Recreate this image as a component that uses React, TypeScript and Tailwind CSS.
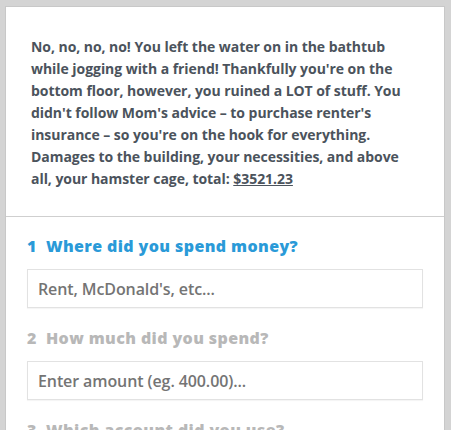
import React from "react";

const lines = [
  "No, no, no, no! You left the water on in the bathtub",
  "while jogging with a friend! Thankfully you're on the",
  "bottom floor, however, you ruined a LOT of stuff. You",
  "didn't follow Mom's advice \u2013 to purchase renter's",
  "insurance \u2013 so you're on the hook for everything.",
  "Damages to the building, your necessities, and above",
];

export default function App() {
  return (
    <div
      className="min-h-[430px] w-[451px] bg-[#d4d4d4] pt-[6px] pl-[5px] pr-[6px] overflow-hidden"
      style={{ fontFamily: '"Open Sans", "Liberation Sans", sans-serif' }}
    >
      <div className="bg-white border border-[#c8c8c8] h-[440px]">
        <div className="pt-[29px] pb-[26px] pl-[25px] pr-[10px] border-b border-[#cfcfcf]">
          <p className="text-[14px] leading-[22px] font-bold text-[#4b535c] tracking-[-0.05px] whitespace-nowrap">
            {lines.map((l, i) => (
              <React.Fragment key={i}>
                {l}
                <br />
              </React.Fragment>
            ))}
            all, your hamster cage, total: <span className="underline">$3521.23</span>
          </p>
        </div>
        <div className="pt-[17px] px-[21px]">
          <h2 className="text-[16px] leading-[24px] font-extrabold text-[#2a9ad8] tracking-[0.4px]">
            1&nbsp;&nbsp;Where did you spend money?
          </h2>
          <div className="mt-[11px] h-[39px] border border-[#e2e2e2] shadow-[0_1px_1px_rgba(0,0,0,0.04)] flex items-center pl-[10px] text-[16px] font-semibold text-[#747474] tracking-[-0.1px]">
            Rent, McDonald's, etc...
          </div>
          <h2 className="mt-[18px] text-[16px] leading-[24px] font-extrabold text-[#b8b8b8] tracking-[0.4px]">
            2&nbsp;&nbsp;How much did you spend?
          </h2>
          <div className="mt-[11px] h-[39px] border border-[#e2e2e2] shadow-[0_1px_1px_rgba(0,0,0,0.04)] flex items-center pl-[10px] text-[16px] font-semibold text-[#747474] tracking-[-0.1px]">
            Enter amount (eg. 400.00)...
          </div>
          <h2 className="mt-[18px] text-[16px] leading-[24px] font-extrabold text-[#b8b8b8] tracking-[0.4px]">
            3&nbsp;&nbsp;Which account did you use?
          </h2>
        </div>
      </div>
    </div>
  );
}
